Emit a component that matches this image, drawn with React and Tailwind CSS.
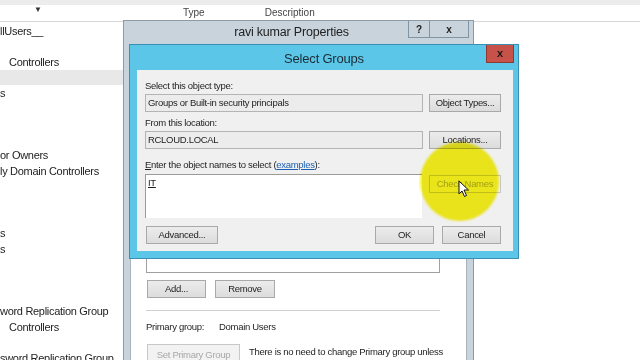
import React from 'react';

const leftRows = [
  { text: 'llUsers__', pad: 0 },
  { text: '', pad: 0 },
  { text: 'Controllers', pad: 9 },
  { text: '', pad: 0, hi: true },
  { text: 's', pad: 0 },
  { text: '', pad: 0 },
  { text: '', pad: 0 },
  { text: '', pad: 0 },
  { text: 'or Owners', pad: 0 },
  { text: 'ly Domain Controllers', pad: 0 },
  { text: '', pad: 0 },
  { text: '', pad: 0 },
  { text: '', pad: 0 },
  { text: 's', pad: 0 },
  { text: 's', pad: 0 },
  { text: '', pad: 0 },
  { text: '', pad: 0 },
  { text: '', pad: 0 },
  { text: 'word Replication Group', pad: 0 },
  { text: 'Controllers', pad: 9 },
  { text: '', pad: 0 },
  { text: 'sword Replication Group', pad: 0 },
];

const WinButton = ({ children, className = '', disabled = false }) => (
  <div
    className={`flex items-center justify-center h-[18px] border text-[9.5px] tracking-[-0.3px] ${
      disabled
        ? 'border-[#c8c8c8] bg-[#f2f2f2] text-[#a8a8a8]'
        : 'border-[#a9a9a9] bg-gradient-to-b from-[#ececec] to-[#dcdcdc] text-[#1e1e1e]'
    } ${className}`}
  >
    {children}
  </div>
);

const Field = ({ children }) => (
  <div className="w-[278px] h-[18px] border border-[#b4b4b4] bg-[#ececec] px-[2px] flex items-center text-[9.5px] tracking-[-0.3px] text-[#1e1e1e]">
    {children}
  </div>
);

export default function App() {
  return (
    <div
      className="relative w-[640px] h-[360px] overflow-hidden bg-white"
      style={{ fontFamily: '"Liberation Sans", "DejaVu Sans", sans-serif' }}
    >
      {/* top header strip */}
      <div className="h-[5px] bg-[#ececec]" />
      <div className="flex h-[17px] border-b border-[#d8d8d8]">
        <div className="w-[124px] flex items-center justify-center pl-[2px]">
          <span className="text-[8px] text-[#333] -mt-[6px] -ml-[50px]">▼</span>
        </div>
        <div className="flex-1 flex items-end pb-[1px] text-[10px] text-[#444]">
          <span className="ml-[59px]">Type</span>
          <span className="ml-[60px]">Description</span>
        </div>
      </div>

      {/* left list pane */}
      <div className="w-[124px] flex flex-col pt-[1px] text-[11px] tracking-[-0.3px] text-[#222] overflow-hidden">
        {leftRows.map((r, i) => (
          <div
            key={i}
            className={`h-[15.6px] flex items-center whitespace-nowrap ${r.hi ? 'bg-[#e8e8e8]' : ''}`}
            style={{ paddingLeft: r.pad }}
          >
            {r.text}
          </div>
        ))}
      </div>

      {/* ravi kumar Properties window */}
      <div className="absolute left-[123px] top-[20px] w-[351px] h-[360px] border border-[#8c9aa6] bg-[#c8d3dc] flex flex-col">
        <div className="h-[23px] flex items-center relative">
          <div className="flex-1 text-center text-[12.5px] text-[#222] tracking-[-0.2px] pr-[14px]">ravi kumar Properties</div>
          <div className="absolute right-[4px] top-0 flex h-[17px]">
            <div className="w-[22px] h-full border border-[#8094a4] border-t-0 flex items-center justify-center text-[10px] font-bold text-[#222]">?</div>
            <div className="w-[39px] h-full border border-l-0 border-[#8094a4] border-t-0 flex items-center justify-center text-[10px] font-bold text-[#222]">x</div>
          </div>
        </div>
        <div className="flex-1 mx-[6px] bg-white border border-[#a8b4be] flex flex-col px-[15px] pt-[156px]">
          <div className="w-[294px] h-[72px] border border-[#a0a0a0] bg-white" />
          <div className="flex gap-[9px] mt-[7px] ml-[1px]">
            <WinButton className="w-[59px]">Add...</WinButton>
            <WinButton className="w-[60px]">Remove</WinButton>
          </div>
          <div className="w-[294px] h-px bg-[#d0d0d0] mt-[12px]" />
          <div className="flex items-center mt-[9px] text-[9.5px] tracking-[-0.3px] text-[#1e1e1e]">
            <span className="w-[73px]">Primary group:</span>
            <span>Domain Users</span>
          </div>
          <div className="flex mt-[10px] ml-[1px] gap-[9px]">
            <WinButton className="w-[93px] h-[22px]" disabled>Set Primary Group</WinButton>
            <div className="text-[9.5px] tracking-[-0.3px] text-[#1e1e1e] leading-[13px] mt-[1px]">
              There is no need to change Primary group unless<br />
              you have Macintosh clients or POSIX-compliant
            </div>
          </div>
        </div>
      </div>

      {/* Select Groups dialog */}
      <div className="absolute left-[129px] top-[44px] w-[390px] h-[215px] bg-[#5bc6e8] border border-[#3a8fb3] flex flex-col">
        <div className="h-[25px] relative flex items-center justify-center">
          <span className="text-[13px] text-[#1c2a33] tracking-[-0.2px] mt-[2px]">Select Groups</span>
          <div className="absolute right-[4px] top-0 w-[28px] h-[18px] bg-[#c7524a] border border-[#8e3a33] border-t-0 flex items-center justify-center text-[11px] font-bold text-[#1a1a1a]">
            x
          </div>
        </div>
        <div className="flex-1 ml-[7px] mr-[5px] mb-[7px] bg-[#f0f0f0] flex flex-col pl-[8px] pt-[10px] text-[9.5px] tracking-[-0.3px] text-[#1e1e1e]">
          <div className="h-[12px] leading-[12px]">Select this object type:</div>
          <div className="flex items-center gap-[6px] mt-[2px]">
            <Field>Groups or Built-in security principals</Field>
            <WinButton className="w-[72px]">Object Types...</WinButton>
          </div>
          <div className="h-[12px] leading-[12px] mt-[5px]">From this location:</div>
          <div className="flex items-center gap-[6px] mt-[2px]">
            <Field>RCLOUD.LOCAL</Field>
            <WinButton className="w-[72px]">Locations...</WinButton>
          </div>
          <div className="h-[12px] leading-[12px] mt-[10px]">
            <span className="underline">E</span>nter the object names to select (
            <span className="text-[#1a5fb4] underline">examples</span>):
          </div>
          <div className="flex items-start gap-[7px] mt-[3px]">
            <div className="w-[277px] h-[44px] border border-[#9a9a9a] border-r-0 border-b-0 bg-white px-[2px] pt-[1px]">
              <span className="underline">IT</span>
            </div>
            <WinButton className="w-[72px] mt-[1px]" disabled>Check Names</WinButton>
          </div>
          <div className="flex items-center mt-[8px]">
            <WinButton className="w-[72px] ml-[1px]">Advanced...</WinButton>
            <WinButton className="w-[59px] ml-[157px]">OK</WinButton>
            <WinButton className="w-[59px] ml-[8px]">Cancel</WinButton>
          </div>
        </div>
      </div>

      {/* cursor highlight */}
      <div className="absolute left-[420px] top-[142px] w-[79px] h-[79px] rounded-full bg-[#f7f21c] mix-blend-multiply blur-[1px]" />

      {/* mouse pointer */}
      <svg className="absolute left-[458px] top-[180px]" width="12" height="18" viewBox="0 0 12 18">
        <path d="M1 1 L1 14 L4 11 L6.5 16.5 L8.5 15.5 L6 10 L10.5 10 Z" fill="#fff" stroke="#111" strokeWidth="1" strokeLinejoin="round" />
      </svg>
    </div>
  );
}
